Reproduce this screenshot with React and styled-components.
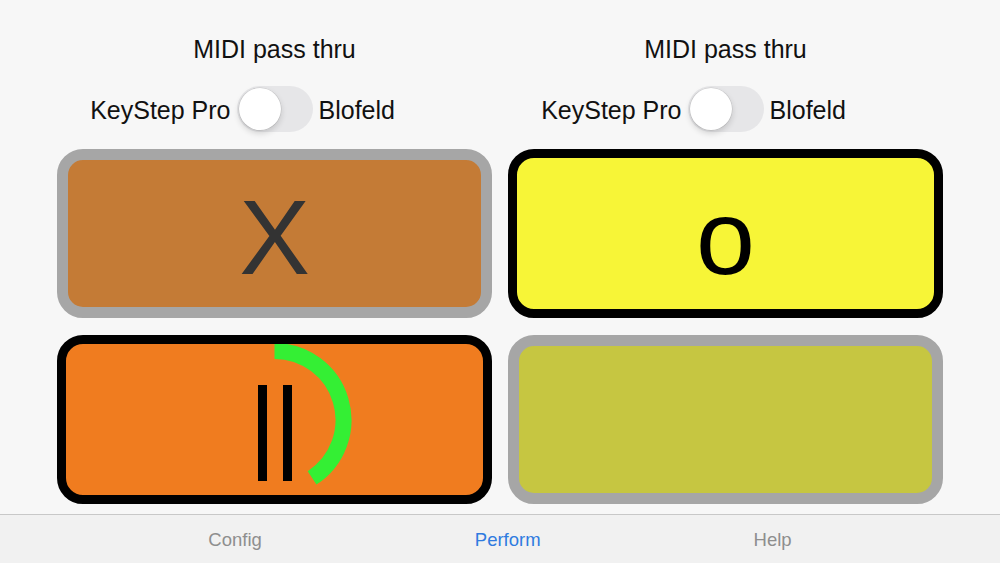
import React from "react";
import styled, { createGlobalStyle } from "styled-components";

const Global = createGlobalStyle`
  html, body { margin: 0; padding: 0; background: #f7f7f7; }
  body { font-family: "Liberation Sans", Arial, sans-serif; -webkit-font-smoothing: antialiased; }
  #root { width: 1000px; height: 563px; overflow: hidden; }
`;

const Screen = styled.div`
  width: 1000px;
  height: 563px;
  display: flex;
  flex-direction: column;
  background: #f7f7f7;
`;

const Main = styled.main`
  flex: 1;
  display: grid;
  grid-template-columns: 1fr 1fr;
  column-gap: 16px;
  padding: 34px 57px 0;
`;

const Column = styled.section`
  display: flex;
  flex-direction: column;
`;

const Title = styled.div`
  height: 30px;
  line-height: 30px;
  text-align: center;
  font-size: 25px;
  color: #111;
`;

const ToggleRow = styled.div`
  margin-top: 22px;
  height: 46px;
  display: grid;
  grid-template-columns: 1fr auto 1fr;
  align-items: center;
  column-gap: 6px;
`;

const Label = styled.span`
  font-size: 25px;
  padding-top: 3px;
  color: #111;
  text-align: ${(p) => (p.$side === "left" ? "right" : "left")};
`;

const Switch = styled.div`
  position: relative;
  width: 76px;
  height: 46px;
  border-radius: 23px;
  background: #e6e6e8;
  box-sizing: border-box;
`;

const Knob = styled.div`
  position: absolute;
  top: 2px;
  left: 2px;
  width: 42px;
  height: 42px;
  border-radius: 50%;
  background: #fff;
  box-shadow: 0 3px 6px rgba(0, 0, 0, 0.16), 0 0 0 0.5px rgba(0, 0, 0, 0.12);
`;

const Pads = styled.div`
  margin-top: 17px;
  display: flex;
  flex-direction: column;
  gap: 17px;
`;

const Pad = styled.div`
  position: relative;
  height: 169px;
  box-sizing: border-box;
  border-radius: 26px;
  border: ${(p) => (p.$active ? "9px solid #000" : "11px solid #a6a6a6")};
  background: ${(p) => p.$fill};
  display: flex;
  align-items: center;
  justify-content: center;
`;

const Glyph = styled.span`
  font-size: 106px;
  line-height: 1;
  padding-top: 6px;
  color: ${(p) => p.$color};
`;

const Overlay = styled.svg`
  position: absolute;
  inset: 0;
  width: 100%;
  height: 100%;
`;

const TabBar = styled.nav`
  height: 49px;
  box-sizing: border-box;
  border-top: 1px solid #c8c8c8;
  background: #f1f1f1;
  display: flex;
  justify-content: center;
  align-items: center;
  gap: 213px;
`;

const Tab = styled.div`
  font-size: 18.5px;
  padding-top: 1px;
  color: ${(p) => (p.$selected ? "#2f7be0" : "#8e8e8e")};
`;

function Toggle() {
  return (
    <Switch>
      <Knob />
    </Switch>
  );
}

function PlayPad() {
  const cx = 208.5;
  const cy = 76;
  const r = 69;
  const a = (57 * Math.PI) / 180;
  const ex = cx + r * Math.cos(a);
  const ey = cy + r * Math.sin(a);
  return (
    <Pad $active $fill="#f07c1f">
      <Overlay viewBox="0 0 417 151" preserveAspectRatio="none">
        <rect x="192" y="41" width="9" height="96" fill="#000" />
        <rect x="217" y="41" width="9" height="96" fill="#000" />
        <path
          d={`M ${cx} ${cy - r} A ${r} ${r} 0 0 1 ${ex} ${ey}`}
          fill="none"
          stroke="#34ef34"
          strokeWidth="16"
        />
      </Overlay>
    </Pad>
  );
}

function Side({ first }) {
  return (
    <Column>
      <Title>MIDI pass thru</Title>
      <ToggleRow>
        <Label $side="left">KeyStep Pro</Label>
        <Toggle />
        <Label $side="right">Blofeld</Label>
      </ToggleRow>
      <Pads>
        {first ? (
          <>
            <Pad $fill="#c47b36">
              <Glyph $color="#333">X</Glyph>
            </Pad>
            <PlayPad />
          </>
        ) : (
          <>
            <Pad $active $fill="#f7f537">
              <Glyph $color="#000">o</Glyph>
            </Pad>
            <Pad $fill="#c6c641" />
          </>
        )}
      </Pads>
    </Column>
  );
}

export default function App() {
  return (
    <>
      <Global />
      <Screen>
        <Main>
          <Side first />
          <Side />
        </Main>
        <TabBar>
          <Tab>Config</Tab>
          <Tab $selected>Perform</Tab>
          <Tab>Help</Tab>
        </TabBar>
      </Screen>
    </>
  );
}
